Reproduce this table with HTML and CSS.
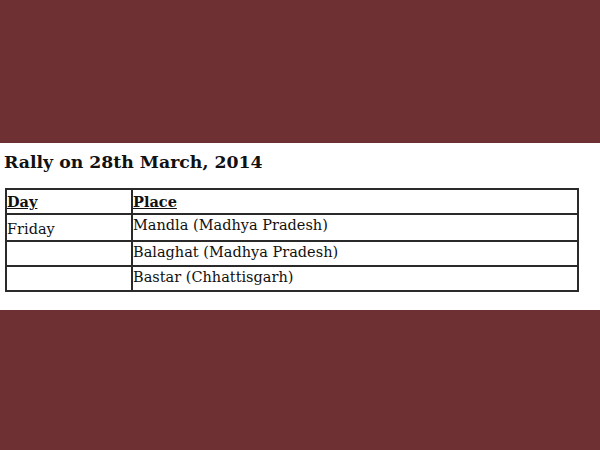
FILE: index.html
```html
<!DOCTYPE html>
<html>
<head>
<meta charset="utf-8">
<link rel="stylesheet" href="styles.css">
</head>
<body>
<div class="band"></div>
<div class="content">
  <h2 class="title">Rally on 28th March, 2014</h2>
  <table class="rally" cellspacing="0">
    <tr class="head"><td class="c1"><u>Day</u></td><td><u>Place</u></td></tr>
    <tr><td class="c1 mid">Friday</td><td>Mandla (Madhya Pradesh)</td></tr>
    <tr><td class="c1"></td><td>Balaghat (Madhya Pradesh)</td></tr>
    <tr><td class="c1"></td><td>Bastar (Chhattisgarh)</td></tr>
  </table>
</div>
</body>
</html>
```

FILE: styles.css
```css
html, body {
  margin: 0;
  padding: 0;
  background: #6f3033;
  width: 600px;
  height: 450px;
  overflow: hidden;
}
.band {
  height: 143px;
}
.content {
  height: 167px;
  background: #ffffff;
  box-sizing: border-box;
  padding: 7px 0 0 4px;
  font-family: "DejaVu Serif", "Liberation Serif", serif;
  color: #111;
}
.title {
  margin: 0;
  font-size: 17.3px;
  font-weight: bold;
  line-height: 24px;
  color: #111;
}
.rally {
  margin: 14px 0 0 1px;
  width: 574px;
  border: 1px solid #2a2a2a;
  border-spacing: 0;
  font-size: 14.5px;
}
.rally td {
  border: 1px solid #2a2a2a;
  height: 23px;
  padding: 0;
  vertical-align: top;
  line-height: 20px;
}
.rally td.mid {
  vertical-align: middle;
  padding-top: 2px;
}
.rally .c1 {
  width: 124px;
}
.rally .head td {
  font-weight: bold;
  line-height: 23px;
}
```
